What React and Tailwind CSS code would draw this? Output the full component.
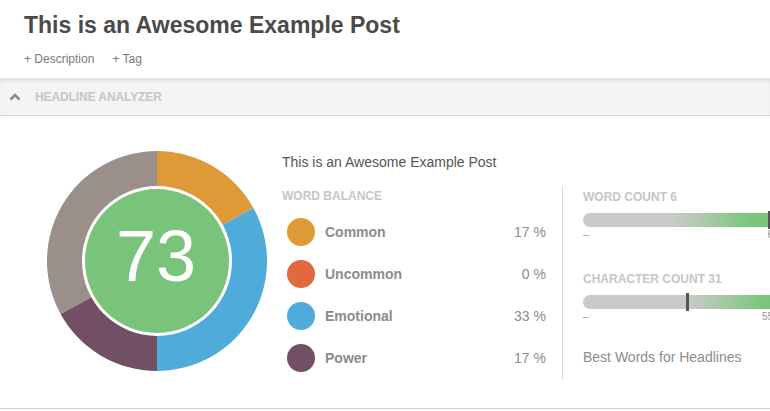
import { useState } from 'react';

const balance = [
  { label: 'Common', pct: 17, color: 'bg-[#df9a38]' },
  { label: 'Uncommon', pct: 0, color: 'bg-[#e2693f]' },
  { label: 'Emotional', pct: 33, color: 'bg-[#4eabda]' },
  { label: 'Power', pct: 17, color: 'bg-[#714f64]' },
];

function ScoreDonut({ score }) {
  return (
    <svg width="220" height="220" viewBox="0 0 220 220" className="shrink-0">
      <path d="M110 110 L110 0 A110 110 0 0 1 206.4 57 Z" fill="#df9a38" />
      <path d="M110 110 L206.4 57 A110 110 0 0 1 110 220 Z" fill="#4eabda" />
      <path d="M110 110 L110 220 A110 110 0 0 1 13.6 163 Z" fill="#714f64" />
      <path d="M110 110 L13.6 163 A110 110 0 0 1 110 0 Z" fill="#9a8f89" />
      <circle cx="110" cy="110" r="75" fill="#ffffff" />
      <circle cx="110" cy="110" r="72" fill="#79c37a" />
      <text
        x="109"
        y="130"
        textAnchor="middle"
        fill="#ffffff"
        fontSize="72"
        fontFamily="'Liberation Sans', Arial, sans-serif"
      >
        {score}
      </text>
    </svg>
  );
}

function CountBar({ title, max, marker, gradient }) {
  return (
    <div>
      <p className="text-[12px] leading-4 font-bold text-[#c6c6c6]">{title}</p>
      <div className="relative mt-2 h-[14px] w-[200px]">
        <div className={`h-full w-full rounded-full ${gradient}`}></div>
        <div
          className="absolute top-[-2px] h-[18px] w-[3px] bg-[#555]"
          style={{ left: marker }}
        ></div>
      </div>
      <div className="mt-[2px] flex w-[190px] justify-between text-[10px] leading-3 text-[#999]">
        <span>–</span>
        <span>{max}</span>
      </div>
    </div>
  );
}

export default function App() {
  const [open, setOpen] = useState(true);

  return (
    <div className="h-[411px] w-[770px] overflow-hidden bg-white font-['Liberation_Sans',Arial,sans-serif]">
      {/* Post header */}
      <div className="px-6 pt-[11px]">
        <h1 className="text-[23px] leading-7 font-bold text-[#4a4a4a]">
          This is an Awesome Example Post
        </h1>
        <div className="mt-3 flex gap-[18px] text-[12px] leading-4 text-[#7a7a7a]">
          <span>+ Description</span>
          <span>+ Tag</span>
        </div>
      </div>

      {/* Analyzer bar */}
      <button
        onClick={() => setOpen(!open)}
        className="mt-[11px] flex h-[38px] w-full items-center gap-[14px] border-t border-b border-t-[#e6e6e6] border-b-[#d4d4d4] bg-[#f4f4f4] pl-[9px] shadow-[inset_0_3px_4px_-2px_rgba(0,0,0,0.12)]"
      >
        <svg width="12" height="8" viewBox="0 0 12 8">
          <polyline points="1.5,6.5 6,2 10.5,6.5" fill="none" stroke="#8a8a8a" strokeWidth="2.6" />
        </svg>
        <span className="text-[12px] font-bold tracking-[-0.1px] text-[#c6c6c6]">HEADLINE ANALYZER</span>
      </button>

      {/* Analyzer content */}
      <div className="flex h-[293px] border-b border-[#cfcfcf] pt-[35px] pl-[47px]">
        <ScoreDonut score={73} />

        <div className="ml-[15px] pt-[1px]">
          <p className="text-[14px] leading-5 text-[#555]">This is an Awesome Example Post</p>

          <div className="mt-[14px] flex">
            <div className="w-[264px] pt-[2px]">
              <p className="text-[12px] leading-4 font-bold text-[#c6c6c6]">WORD BALANCE</p>
              <div className="mt-[7px]">
                {balance.map((row) => (
                  <div key={row.label} className="flex h-[42px] items-center">
                    <div className={`ml-[5px] h-[28px] w-[28px] rounded-full ${row.color}`}></div>
                    <span className="ml-[10px] flex-1 text-[14px] font-bold text-[#8c8c8c]">{row.label}</span>
                    <span className="text-[14px] text-[#8c8c8c]">{row.pct} %</span>
                  </div>
                ))}
              </div>
            </div>

            <div className="ml-4 h-[193px] border-l border-[#d8d8d8] pt-[3px] pl-5">
              <CountBar
                title="WORD COUNT 6"
                max="6"
                marker="185px"
                gradient="bg-linear-to-r from-[#c9c9c9] from-[45%] to-[#7cc67c] to-[83%]"
              />
              <div className="mt-[30px]">
                <CountBar
                  title="CHARACTER COUNT 31"
                  max="55"
                  marker="103px"
                  gradient="bg-linear-to-r from-[#c9c9c9] from-[52%] to-[#7cc67c] to-[90%]"
                />
              </div>
              <p className="mt-[24px] text-[14px] leading-5 text-[#8c8c8c]">Best Words for Headlines</p>
            </div>
          </div>
        </div>
      </div>
    </div>
  );
}
